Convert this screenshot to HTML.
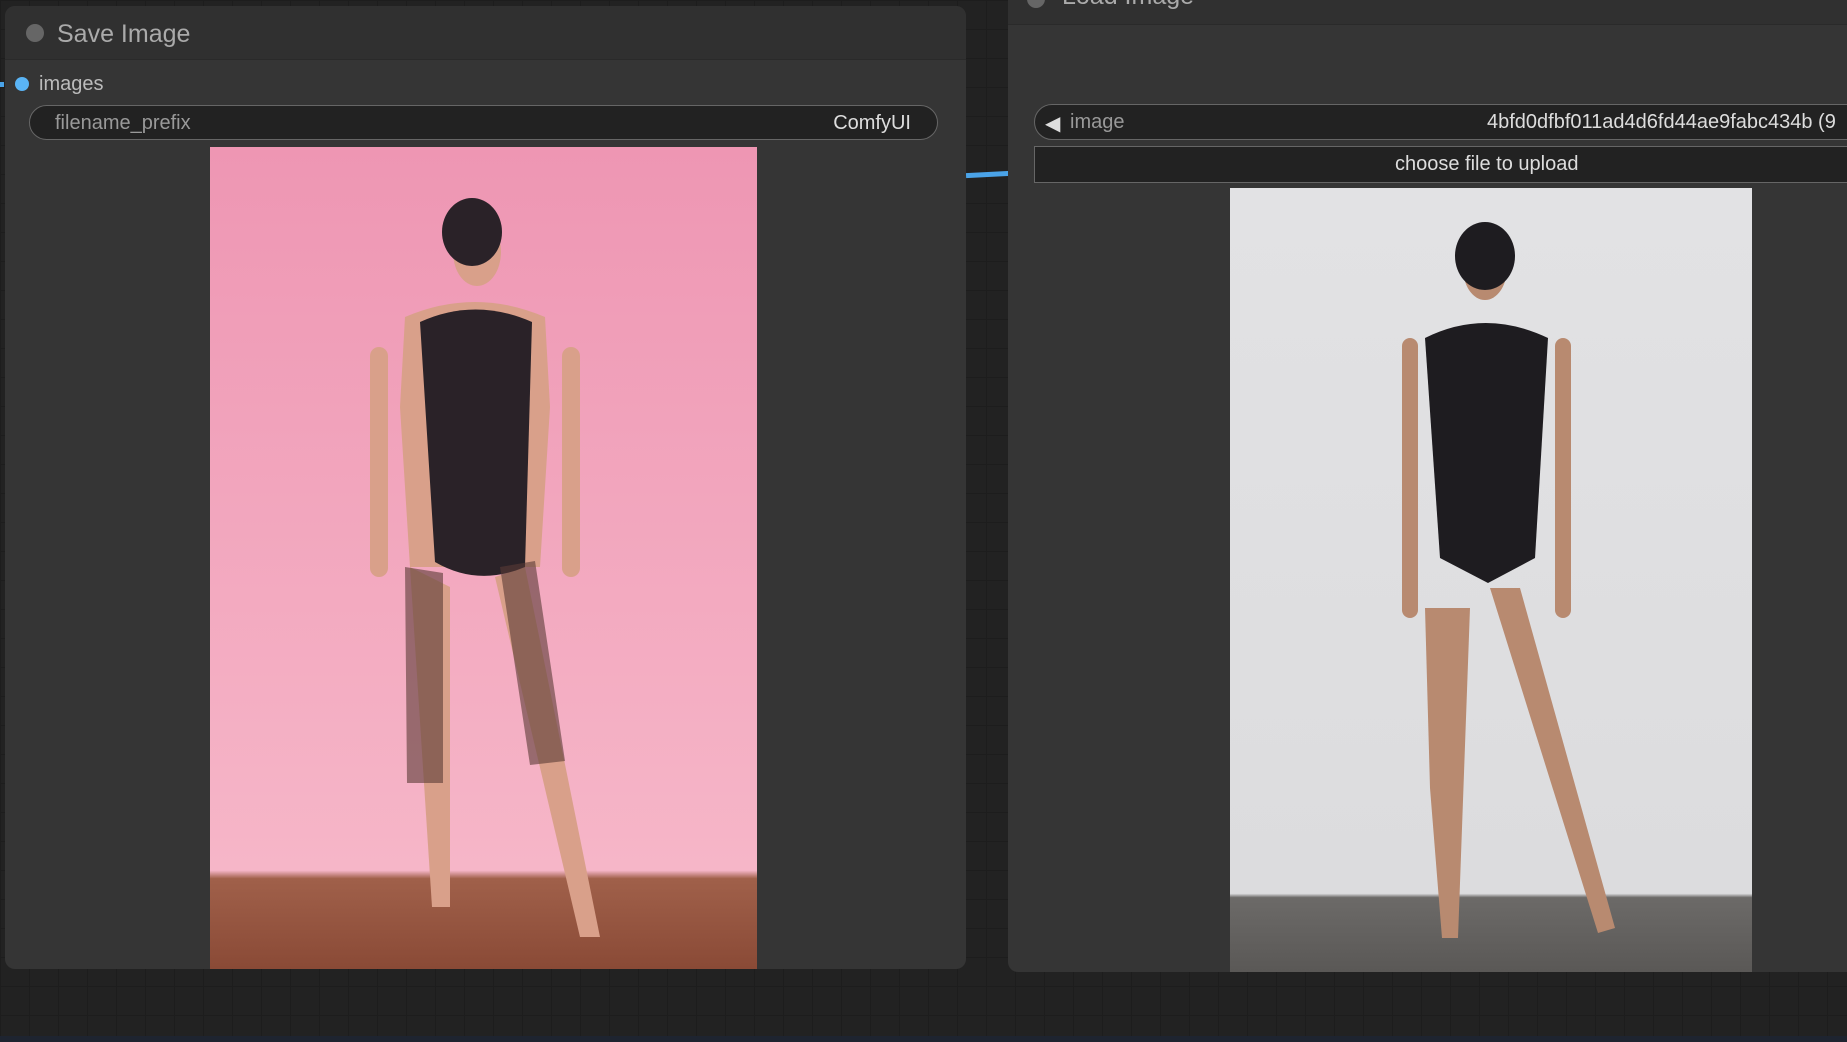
<!DOCTYPE html>
<html><head><meta charset="utf-8"><style>
*{margin:0;padding:0;box-sizing:border-box}
body{width:1847px;height:1042px;overflow:hidden;position:relative;font-family:"Liberation Sans",sans-serif;
background-color:#222;background-image:linear-gradient(#1d1d1d 1px,transparent 1px),linear-gradient(90deg,#1d1d1d 1px,transparent 1px);background-size:29px 29px}
.node{position:absolute;background:#353535;border-radius:10px;overflow:hidden}
.title{position:absolute;left:0;right:0;top:0;background:#303030;border-bottom:1px solid #2a2a2a;color:#aaa;font-size:25px}
.dot{position:absolute;width:18px;height:18px;border-radius:50%;background:#666}
.w{position:absolute;background:#222;border:1.5px solid #666;border-radius:20px;color:#999;font-size:20px}
</style></head><body>
<div style="position:absolute;left:966px;top:172px;width:44px;height:5px;background:#4aa3e8;transform:rotate(-3deg)"></div>
<div style="position:absolute;left:0;top:82px;width:4px;height:5px;background:#4aa3e8"></div>

<div class="node" style="left:5px;top:6px;width:961px;height:963px">
 <div class="title" style="height:54px"><div class="dot" style="left:21px;top:18px"></div><span style="position:absolute;left:52px;top:14px">Save Image</span></div>
 <div style="position:absolute;left:10px;top:71px;width:14px;height:14px;border-radius:50%;background:#5ab4f5"></div>
 <div style="position:absolute;left:34px;top:67px;color:#bbb;font-size:20px">images</div>
 <div class="w" style="left:24px;top:99px;width:909px;height:35px"><span style="position:absolute;left:25px;top:6px">filename_prefix</span><span style="position:absolute;right:26px;top:6px;color:#ddd">ComfyUI</span></div>
 <div style="position:absolute;left:205px;top:141px;width:547px;height:822px;background:linear-gradient(#ee96b3,#f6b6c8 88%,#a0604a 89%,#8a4a36)">
  <svg width="547" height="822" viewBox="0 0 547 822"><g fill="#d9a08a"><ellipse cx="267" cy="105" rx="24" ry="34"/>
  <path d="M195 170 Q265 140 335 170 L340 260 L330 420 L200 420 L190 260Z"/>
  <path d="M200 420 L240 440 L240 760 L222 760Z"/><path d="M285 430 L315 420 L390 790 L370 790Z"/>
  <rect x="160" y="200" width="18" height="230" rx="9"/><rect x="352" y="200" width="18" height="230" rx="9"/></g>
  <path d="M210 175 Q265 150 322 175 L315 420 Q268 440 225 415Z" fill="#2a2228"/>
  <path d="M195 420 l38 6 l0 210 l-36 0z M290 420 l35 -6 l30 200 l-35 4z" fill="#5a3a36" opacity=".6"/>
  <ellipse cx="262" cy="85" rx="30" ry="34" fill="#2a2228"/></svg>
 </div>
</div>

<div class="node" style="left:1008px;top:-20px;width:860px;height:992px">
 <div class="title" style="height:45px"><div class="dot" style="left:19px;top:10px"></div><span style="position:absolute;left:54px;top:2px">Load Image</span></div>
 <div class="w" style="left:26px;top:124px;width:900px;height:36px"><span style="position:absolute;left:10px;top:6px;color:#ddd">◀</span><span style="position:absolute;left:35px;top:6px">image</span><span style="position:absolute;left:452px;top:6px;color:#ddd;white-space:nowrap">4bfd0dfbf011ad4d6fd44ae9fabc434b (9</span></div>
 <div style="position:absolute;left:26px;top:166px;width:900px;height:37px;background:#222;border:1.5px solid #666;color:#ddd;font-size:20px"><span style="position:absolute;left:360px;top:6px">choose file to upload</span></div>
 <div style="position:absolute;left:222px;top:208px;width:522px;height:784px;background:linear-gradient(#e2e2e4,#dcdcde 90%,#6c6a68 90.5%,#5a5856)">
  <svg width="522" height="784" viewBox="0 0 522 784"><g fill="#b88a70"><ellipse cx="255" cy="80" rx="22" ry="32"/>
  <path d="M195 420 L240 420 L228 750 L212 750 L200 600Z"/><path d="M260 400 L290 400 L385 740 L368 745Z"/>
  <rect x="172" y="150" width="16" height="280" rx="8"/><rect x="325" y="150" width="16" height="280" rx="8"/></g>
  <path d="M195 150 Q255 120 318 150 L305 370 L258 395 L210 370Z" fill="#1e1c20"/><ellipse cx="255" cy="68" rx="30" ry="34" fill="#1e1c20"/></svg>
 </div>
</div>
<div style="position:absolute;left:0;top:1036px;width:1847px;height:6px;background:#1e2430"></div>
</body></html>
